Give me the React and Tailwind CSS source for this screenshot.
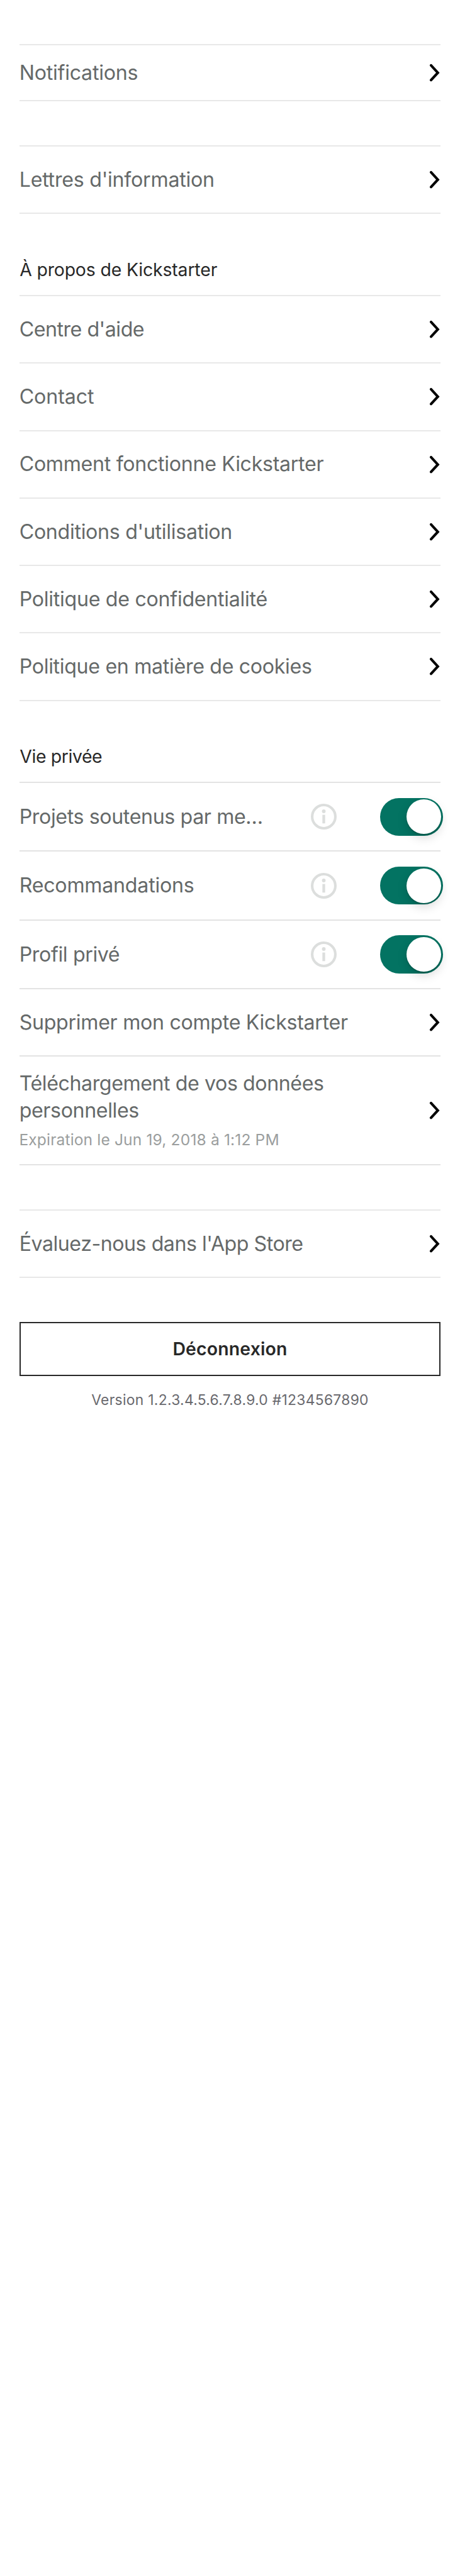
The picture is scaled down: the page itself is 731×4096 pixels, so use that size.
import React from "react";

function Chevron() {
  return (
    <svg className="mr-[1.5px] h-[27.3px] w-[15.6px] shrink-0 overflow-visible" viewBox="0 0 16 28" fill="none">
      <path d="M2 2 13.1 14 2 26" stroke="#000" strokeWidth="4.2" strokeLinecap="round" strokeLinejoin="miter" />
    </svg>
  );
}

function Info() {
  return (
    <svg className="mr-[69.2px] size-[41px] shrink-0" viewBox="0 0 42 42" fill="none">
      <circle cx="21" cy="21" r="18.9" stroke="#dcdedd" strokeWidth="4.2" />
      <circle cx="21" cy="12.3" r="3" fill="#dcdedd" />
      <rect x="18.8" y="18" width="4.4" height="14" fill="#dcdedd" />
    </svg>
  );
}

function Toggle() {
  return (
    <span className="-mr-[3.9px] flex h-[60.45px] w-[99.45px] shrink-0 items-center justify-end rounded-full bg-[#037362] pr-[2.6px]">
      <span className="size-[55px] rounded-full bg-white shadow-[0_6px_16px_rgba(0,0,0,0.15),0_2px_2px_rgba(0,0,0,0.16)]" />
    </span>
  );
}

function Label({ text, spacing }) {
  return <span className={`-ml-[0.5px] whitespace-nowrap ${spacing}`}>{text}</span>;
}

function Row({ text, spacing, height = "h-[107.28px]", line = "border-[#e8e8e8]" }) {
  return (
    <div className={`flex items-center justify-between border-b-2 ${height} ${line}`}>
      <Label text={text} spacing={spacing} />
      <Chevron />
    </div>
  );
}

function ToggleRow({ text, spacing }) {
  return (
    <div className="flex h-[109.23px] items-center border-b-2 border-[#e3e3e3]">
      <div className="flex-1">
        <Label text={text} spacing={spacing} />
      </div>
      <Info />
      <Toggle />
    </div>
  );
}

function Header({ text, spacing, line = "border-[#e8e8e8]" }) {
  return (
    <h2
      className={`flex h-[130.68px] items-end border-b-2 pb-[26.4px] text-[28.4px] leading-[28px] text-[#282828] ${spacing} ${line}`}
    >
      <span>{text}</span>
    </h2>
  );
}

function Gap() {
  return <div className="h-[72.17px] border-b-2 border-[#e8e8e8]" />;
}

export default function App() {
  return (
    <main className="min-h-[4096px] w-[731px] bg-white px-[31.2px] font-['Inter',sans-serif] text-[32.2px] leading-[43.55px] text-[#656969]">
      <Gap />
      <Row text="Notifications" spacing="tracking-[-0.27px]" height="h-[88.75px]" />
      <Gap />
      <Row text="Lettres d'information" spacing="tracking-[-0.26px]" />

      <Header text="À propos de Kickstarter" spacing="tracking-[-0.15px]" />
      <Row text="Centre d'aide" spacing="tracking-[-0.5px]" />
      <Row text="Contact" spacing="tracking-[-0.1px]" />
      <Row text="Comment fonctionne Kickstarter" spacing="tracking-[-0.32px]" />
      <Row text="Conditions d'utilisation" spacing="tracking-[-0.32px]" />
      <Row text="Politique de confidentialité" spacing="tracking-[-0.3px]" />
      <Row text="Politique en matière de cookies" spacing="tracking-[-0.34px]" />

      <Header text="Vie privée" spacing="tracking-[-0.38px]" line="border-[#e3e3e3]" />
      <ToggleRow text="Projets soutenus par me…" spacing="tracking-[-0.4px]" />
      <ToggleRow text="Recommandations" spacing="tracking-[-0.25px]" />
      <ToggleRow text="Profil privé" spacing="tracking-[-0.4px]" />
      <Row text="Supprimer mon compte Kickstarter" spacing="tracking-[-0.32px]" line="border-[#e3e3e3]" />
      <div className="flex h-[172.6px] items-center justify-between border-b-2 border-[#e3e3e3]">
        <div className="flex flex-col self-start pt-[20.6px]">
          <Label text="Téléchargement de vos données" spacing="tracking-[-0.44px]" />
          <Label text="personnelles" spacing="tracking-[-0.4px]" />
          <span className="mt-[9px] -ml-[0.8px] text-[24.6px] leading-[30px] tracking-[0.13px] text-[#9b9e9e]">
            Expiration le Jun 19, 2018 à 1:12 PM
          </span>
        </div>
        <Chevron />
      </div>

      <Gap />
      <Row text="Évaluez-nous dans l'App Store" spacing="tracking-[-0.5px]" />

      <button className="mt-[70.2px] flex h-[85.8px] w-full items-center justify-center border-2 border-[#282828] text-[28.4px] font-semibold leading-[34px] tracking-[0.17px] text-[#282828]">
        Déconnexion
      </button>
      <p className="mt-[23.4px] text-center text-[22.8px] leading-[28px] tracking-[0.31px] text-[#69696e]">
        Version 1.2.3.4.5.6.7.8.9.0 #1234567890
      </p>
    </main>
  );
}
